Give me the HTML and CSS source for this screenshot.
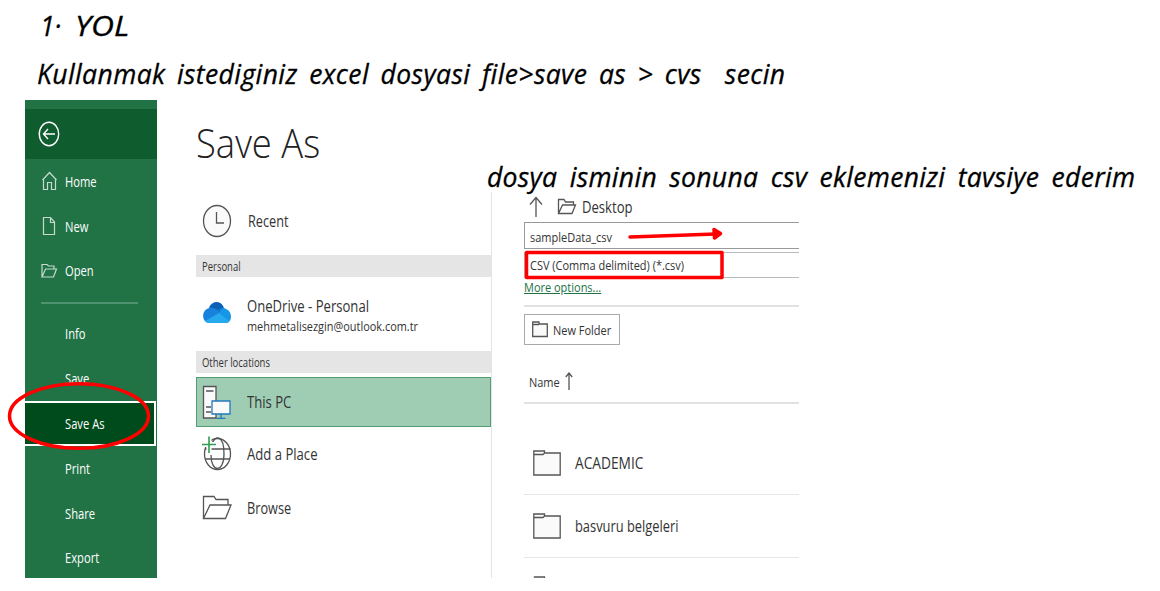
FILE: index.html
```
<!DOCTYPE html>
<html lang="tr">
<head>
<meta charset="utf-8">
<title>Save As</title>
<link rel="stylesheet" href="styles.css">
</head>
<body>
<main class="page">
  <h1 class="hand step"><span class="w-num">1·</span><span class="w-yol">YOL</span></h1>
  <p class="hand line"><span class="fit-line">Kullanmak istediginiz excel dosyasi file&gt;save as &gt; cvs&nbsp; secin</span></p>
  <p class="hand tip"><span class="fit-tip">dosya isminin sonuna csv eklemenizi tavsiye ederim</span></p>

  <section class="window">
    <nav class="sidebar">
      <div class="back">
        <svg width="22" height="26" viewBox="0 0 22 26"><ellipse cx="11" cy="13" rx="9.7" ry="11.7"/><path d="M5.500 13H17M10 8L5.500 13L10 18"/></svg>
      </div>
      <ul class="menu">
        <li><svg width="17" height="20" viewBox="0 0 17 20"><path d="M1.500 9L8.500 1.500L15.500 9M2.500 8V18.500H6.500V11.500H10.500V18.500H14.500V8"/></svg><span class="ui">Home</span></li>
        <li><svg width="17" height="20" viewBox="0 0 17 20"><path d="M2.500 1.500H9.500L13.500 6V18.500H2.500ZM9.500 1.500V6.500H13.500"/></svg><span class="ui">New</span></li>
        <li><svg width="17" height="20" viewBox="0 0 17 20"><path d="M1 16V3.500H6L7.500 5H13V8M1 16L4.500 8H15.500L12.500 16Z"/></svg><span class="ui">Open</span></li>
      </ul>
      <hr>
      <ul class="menu sub">
        <li><span class="ui">Info</span></li>
        <li><span class="ui">Save</span></li>
        <li class="active"><span class="ui">Save As</span></li>
        <li><span class="ui">Print</span></li>
        <li><span class="ui">Share</span></li>
        <li><span class="ui">Export</span></li>
      </ul>
    </nav>

    <div class="places">
      <h2><span class="ui">Save As</span></h2>
      <div class="list">
        <div class="place recent">
          <svg width="30" height="34" viewBox="0 0 30 34"><ellipse cx="15" cy="17" rx="13.500" ry="15.500"/><path d="M14.500 8V19H22"/></svg>
          <span class="ui">Recent</span>
        </div>
        <div class="group"><span class="ui">Personal</span></div>
        <div class="place drive">
          <svg class="cloud" width="30" height="34" viewBox="0 0 30 34">
            <path fill="#1078d0" d="M7 12C9 5 19 4 22 12L24 18L12 22Z"/>
            <path fill="#0b60b4" d="M8 12C10 5 19 4 21.500 11.500C18 12 15 14 14 16Z"/>
            <path fill="#1781db" d="M7 27C-1 26 -1 13 8 12C12 11 16 14 19 17L10 25Z"/>
            <path fill="#1597e5" d="M18 16C19 12 22 11 24 13C30 15 31 25 25 27L15 19Z"/>
            <path fill="#27a9ed" d="M3 25L17 17L27 25C26 27 25 27 24 27H7Q4 27 3 25Z"/>
          </svg>
          <div class="two"><span class="ui">OneDrive - Personal</span><span class="ui mail">mehmetalisezgin@outlook.com.tr</span></div>
        </div>
        <div class="group"><span class="ui">Other locations</span></div>
        <div class="place pc">
          <svg width="30" height="34" viewBox="0 0 30 34"><path d="M1.500 1.500H14V33H1.500ZM4 6H11.500M4 22H9M4 27H9"/><path class="screen" d="M10 16H28V29H10ZM19 29V33.500M14.500 33.500H23.500"/></svg>
          <span class="ui">This PC</span>
        </div>
        <div class="place add">
          <svg width="32" height="36" viewBox="0 0 32 36"><ellipse cx="15.500" cy="18" rx="13" ry="15.500"/><path d="M9 19C9 37 22 37 22 18C22 -2 12.500 -1 10 8M3 13H28.500M3 23H28"/><path class="knock" d="M7 1V16M1 8.500H13"/><path class="plus" d="M7 0.500V17M0 8.500H14"/></svg>
          <span class="ui">Add a Place</span>
        </div>
        <div class="place browse">
          <svg width="30" height="34" viewBox="0 0 30 34"><path d="M1.500 27.500V5.500H12L14 8.500H26V14M1.500 27.500L8 14H29L23.500 27.500Z"/></svg>
          <span class="ui">Browse</span>
        </div>
      </div>
    </div>

    <div class="detail">
      <div class="path">
        <svg width="14" height="22" viewBox="0 0 14 22"><path d="M7 21V2M1 8.500L7 1.500L13 8.500"/></svg>
        <svg width="20" height="18" viewBox="0 0 20 18"><path d="M1.500 15.500V1.500H7L8.500 4H16.500V7M1.500 15.500L5.500 7H18.500L15 15.500Z"/></svg>
        <span class="ui">Desktop</span>
      </div>
      <div class="field"><span class="ui">sampleData_csv</span></div>
      <div class="field type"><span class="ui">CSV (Comma delimited) (*.csv)</span></div>
      <a class="more"><span class="ui">More options...</span></a>
      <div class="tools">
        <button><svg width="16" height="17" viewBox="0 0 16 17"><path d="M.7 1H7V3H15.300V15.500H.7ZM.7 3.500H7"/></svg><span class="ui">New Folder</span></button>
      </div>
      <div class="heading"><span class="ui">Name</span><svg width="8" height="19" viewBox="0 0 8 19"><path d="M4 18V1.500M.8 5L4 1L7.200 5"/></svg></div>
      <div class="file first"><svg width="28" height="26" viewBox="0 0 28 26"><path d="M.8 1H11.500V3H27.200V25H.8ZM.8 4.500H10L11.500 3"/></svg><span class="ui acad">ACADEMIC</span></div>
      <div class="file"><svg width="28" height="26" viewBox="0 0 28 26"><path d="M.8 1H11.500V3H27.200V25H.8ZM.8 4.500H10L11.500 3"/></svg><span class="ui">basvuru belgeleri</span></div>
      <div class="file cut"><svg width="28" height="26" viewBox="0 0 28 26"><path d="M.8 1H11.500V3"/></svg></div>
    </div>
  </section>

  <svg class="marks" width="1160" height="591" viewBox="0 0 1160 591">
    <ellipse cx="79" cy="416" rx="69.500" ry="32.300"/>
    <rect x="526.500" y="252.500" width="195.500" height="25"/>
    <path d="M630 237L716 234"/>
    <path class="tipmark" d="M714 229.500L720.500 233.500L714.500 238Z"/>
  </svg>
</main>
</body>
</html>
```
FILE: styles.css
```
* { box-sizing: border-box; }
body { margin: 0; background: #fff; }
.page { position: relative; width: 1160px; height: 591px; overflow: hidden; font-family: "Open Sans", "Noto Sans", sans-serif; color: #333; }
svg { flex: none; fill: none; }
ul { list-style: none; margin: 0; padding: 0; }
.hand { margin: 0; font: italic 400 26.500px/36px "Open Sans", sans-serif; color: #000; -webkit-text-stroke: .3px #000; white-space: nowrap; }
.hand span { display: inline-block; transform-origin: 0 50%; }
.step { display: flex; gap: 14px; height: 56px; padding: 8px 0 0 40px; }
.w-yol { transform: scaleX(1.2); }
.line { height: 44px; padding-left: 37px; }
.fit-line { letter-spacing: .4px; word-spacing: 4.300px; }
.fit-tip { letter-spacing: .3px; word-spacing: 5.200px; }
.tip { position: absolute; left: 487px; top: 159px; z-index: 2; }
.ui { display: inline-block; white-space: nowrap; transform: scaleX(.845); transform-origin: 0 50%; }

.window { display: flex; width: 774px; height: 478px; margin-left: 25px; overflow: hidden; }
.sidebar { width: 132px; height: 478px; padding-top: 9px; background: #217346; color: #fff; font-size: 14px; }
.sidebar .ui { transform: scaleX(.8); }
.back { height: 50px; padding: 12px 0 0 13px; background: #0f5c2f; }
.back svg { stroke: #fff; stroke-width: 1.4; }
.menu li { display: flex; align-items: center; gap: 7px; height: 44.8px; padding-left: 16px; }
.menu svg { stroke: #c6dace; stroke-width: 1.2; }
.sidebar hr { width: 97px; height: 2px; margin: 8.200px 0 8px 16px; border: 0; background: #4e9270; }
.sub li { padding-left: 40px; }
.sub .active { width: 131px; height: 44.800px; border: 2px solid #fff; border-left: 0; background: #004b1c; }

.places { width: 335px; }
.places h2 { height: 92px; margin: 0; padding: 12px 0 0 39px; font-size: 41px; font-weight: 300; line-height: 60px; color: #222; }
.places h2 .ui { transform: scaleX(.888); }
.list { height: 386px; padding-left: 39px; border-right: 1px solid #e4e4e4; font-size: 15.500px; }
.place { display: flex; align-items: center; gap: 15px; padding-left: 6px; }
.place svg { stroke: #555; stroke-width: 1.3; }
.place .cloud { stroke: none; }
.place .screen { stroke: #2277bd; fill: #fafafa; }
.place .knock { stroke: #fff; stroke-width: 5; }
.place .plus { stroke: #2f9e4f; stroke-width: 1.6; }
.recent { height: 63px; gap: 16px; padding-bottom: 5px; }
.recent .ui { transform: scaleX(.82); }
.recent svg { fill: #fafafa; }
.group { height: 22px; padding-left: 6px; background: #e5e5e5; font-size: 12px; line-height: 23px; }
.group .ui { transform: scaleX(.79); }
.drive { height: 74px; padding-bottom: 2px; }
.two { display: flex; flex-direction: column; padding-top: 6px; line-height: 20.500px; }
.two .mail { font-size: 13px; transform: scaleX(.84); }
.pc { width: 295px; height: 50px; margin-top: 4px; border: 1px solid #549e74; background: #9fcdb4; }
.pc svg { fill: #fafafa; }
.place.pc { padding-left: 5px; }
.add { height: 54px; gap: 13px; }
.browse { height: 54px; }
.browse .ui { transform: scaleX(.82); }

.detail { width: 307px; padding: 92px 0 0 32px; }
.path { display: flex; align-items: center; height: 30px; padding: 0 0 0 5px; font-size: 15.500px; }
.path svg { stroke: #555; stroke-width: 1.3; margin-right: 14px; }
.path svg + svg { margin-right: 5px; }
.field { height: 27px; margin-bottom: 3px; padding-left: 5px; border: 1px solid #999; border-right: 0; font-size: 13px; line-height: 28px; }
.field.type { height: 26px; margin-bottom: 0; line-height: 24px; border-color: #bbb; }
.more { display: block; height: 27px; font-size: 13px; line-height: 18px; color: #217346; }
.more .ui { text-decoration: underline; }
.tools { height: 62px; padding-top: 7px; border-top: 2px solid #e1e1e1; }
.tools button { display: flex; align-items: center; gap: 5px; width: 96px; height: 31px; padding: 0 0 0 7px; border: 1px solid #aaa; background: #fff; font: 13px "Open Sans", sans-serif; color: #333; }
.tools svg, .heading svg, .file svg { stroke: #555; stroke-width: 1.3; }
.tools svg, .file svg { fill: #fafafa; }
.heading { display: flex; align-items: center; height: 37px; padding: 0 0 6px 5px; border-bottom: 2px solid #e1e1e1; font-size: 13px; }
.file { display: flex; align-items: center; gap: 14px; height: 63px; padding-left: 9px; border-bottom: 1px solid #e7e7e7; font-size: 15.500px; }
.file .ui { transform: scaleX(.83); }
.file .acad { transform: scaleX(.885); }
.file.first { height: 91px; padding-top: 28px; }
.file.cut { align-items: flex-start; padding-top: 18px; border: 0; }

.marks { position: absolute; inset: 0; z-index: 3; pointer-events: none; stroke: #f00; stroke-width: 3.500; stroke-linecap: round; stroke-linejoin: round; }
.marks .tipmark { fill: #f00; }
```
